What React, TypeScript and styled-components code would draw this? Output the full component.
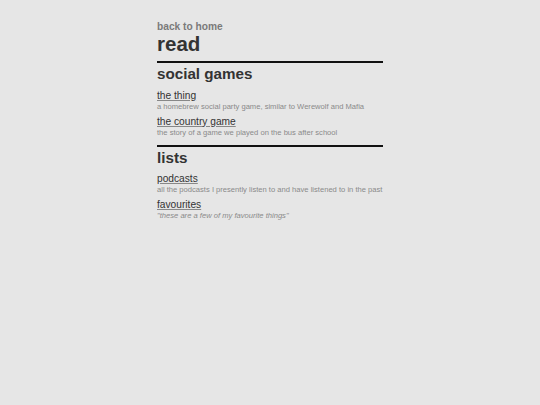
import React from "react";
import styled, { createGlobalStyle } from "styled-components";

const Global = createGlobalStyle`
  html, body { margin: 0; padding: 0; background: #e6e6e6; }
  body { font-family: "Liberation Sans", Arial, sans-serif; color: #333; }
`;

const Page = styled.main`
  width: 226px;
  margin: 0 auto;
  padding-top: 21px;
  display: flex;
  flex-direction: column;
`;

const Back = styled.a`
  font-size: 10.2px;
  font-weight: bold;
  color: #7a7a7a;
  text-decoration: none;
  line-height: 12px;
`;

const Title = styled.h1`
  margin: 0 0 2px;
  font-size: 20.5px;
  line-height: 22px;
  font-weight: bold;
  color: #333;
`;

const Section = styled.section`
  border-top: 2.5px solid #111;
  margin-top: 4px;
  padding: 1px 0 4px;
  display: flex;
  flex-direction: column;
  gap: 5px;
`;

const SectionTitle = styled.h2`
  margin: 0 0 1.5px;
  font-size: 15.2px;
  line-height: 19px;
  font-weight: bold;
  color: #333;
`;

const Item = styled.div`
  display: flex;
  flex-direction: column;
`;

const ItemLink = styled.a`
  font-size: 10.2px;
  line-height: 12px;
  color: #333;
  text-decoration: underline;
  text-decoration-color: #888;
`;

const Desc = styled.span<{ $italic?: boolean }>`
  font-size: 7.6px;
  line-height: 9px;
  color: #8a8a8a;
  font-style: ${(p) => (p.$italic ? "italic" : "normal")};
`;

const sections = [
  {
    title: "social games",
    items: [
      { name: "the thing", desc: "a homebrew social party game, similar to Werewolf and Mafia" },
      { name: "the country game", desc: "the story of a game we played on the bus after school" },
    ],
  },
  {
    title: "lists",
    items: [
      { name: "podcasts", desc: "all the podcasts I presently listen to and have listened to in the past" },
      { name: "favourites", desc: "\"these are a few of my favourite things\"", italic: true },
    ],
  },
];

export default function App() {
  return (
    <>
      <Global />
      <Page>
        <Back href="#">back to home</Back>
        <Title>read</Title>
        {sections.map((s) => (
          <Section key={s.title}>
            <SectionTitle>{s.title}</SectionTitle>
            {s.items.map((it) => (
              <Item key={it.name}>
                <ItemLink href="#">{it.name}</ItemLink>
                <Desc $italic={it.italic}>{it.desc}</Desc>
              </Item>
            ))}
          </Section>
        ))}
      </Page>
    </>
  );
}
